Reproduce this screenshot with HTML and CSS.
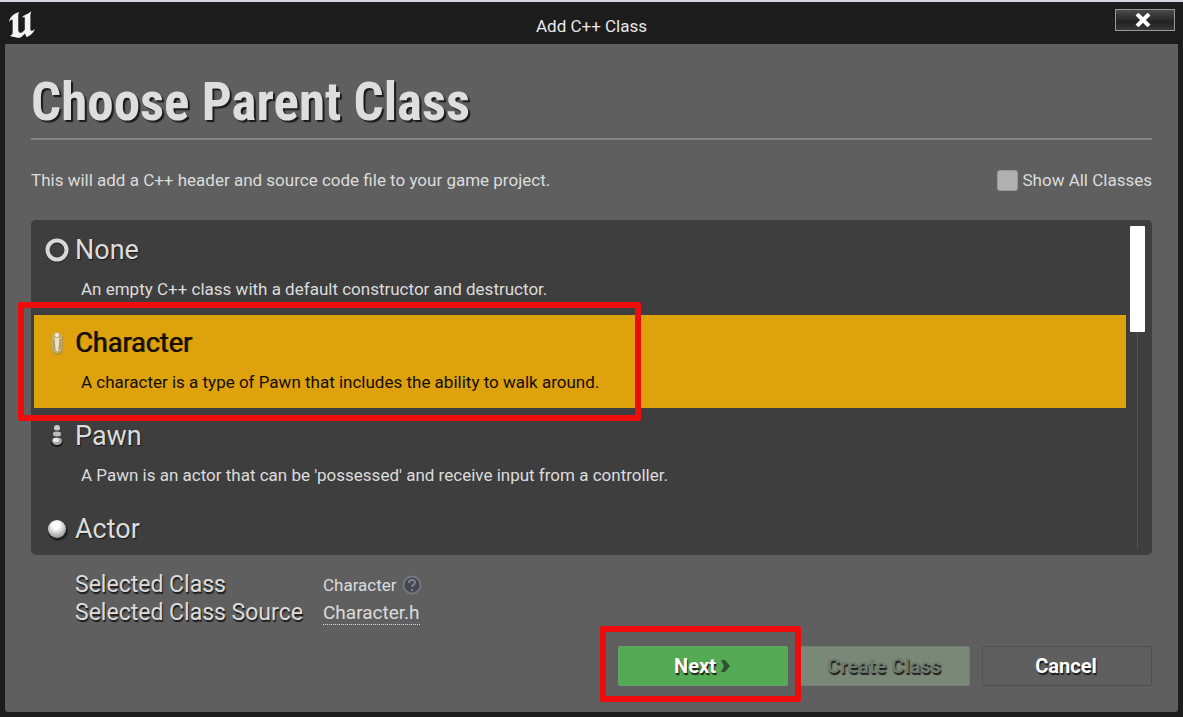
FILE: index.html
```html
<!DOCTYPE html>
<html lang="en">
<head>
  <meta charset="UTF-8" />
  <meta name="viewport" content="width=device-width, initial-scale=1.0" />
  <title>Add C++ Class</title>
  <link rel="stylesheet" href="styles.css">
</head>
<body>
  <div class="window">
    <header class="titlebar">
      <svg class="logo" viewBox="0 0 28 30" aria-hidden="true">
        <path d="M0 12 C1 6 5 3 11 1 C10 3 10 4 10 6 V20 C10 23 12 24 14 23 L17 20 V8 C17 6 16 6 14 7 C16 4 20 4 24 0 C23 3 23 4 23 6 V19 C23 22 25 22 28 19 C26 24 23 26 19 28 L17 24 C14 28 11 30 7 28 C4 28 3 28 1 26 C4 26 4 24 4 22 V11 C4 8 2 9 0 12 Z" />
      </svg>
      <span class="caption">Add C++ Class</span>
      <button class="close" type="button" aria-label="Close">
        <svg viewBox="0 0 16 14" aria-hidden="true"><path d="M2 1 L14 13 M14 1 L2 13" /></svg>
      </button>
    </header>

    <main class="content">
      <h1>Choose Parent Class</h1>

      <div class="intro">
        <p>This will add a C++ header and source code file to your game project.</p>
        <label class="show-all" for="showAll">
          <input type="checkbox" id="showAll">
          Show All Classes
        </label>
      </div>

      <div class="list-wrap">
        <div class="list">
          <ul class="classes" role="listbox" aria-label="Parent class">
            <li class="item" role="option" aria-selected="false">
              <h2>
                <svg class="icon" viewBox="0 0 26 26" aria-hidden="true">
                  <circle cx="13" cy="14" r="9.5" fill="none" stroke="#222" stroke-width="4" />
                  <circle cx="13" cy="13" r="9.5" fill="none" stroke="#d8d8d8" stroke-width="4" />
                </svg>
                None
              </h2>
              <p>An empty C++ class with a default constructor and destructor.</p>
            </li>
            <li class="item selected" role="option" aria-selected="true">
              <h2>
                <svg class="icon" viewBox="0 0 26 26" aria-hidden="true">
                  <rect x="8" y="3" width="11" height="22" rx="5" fill="#b8963c" />
                  <rect x="8" y="2" width="10" height="21" rx="5" fill="#c6ad72" />
                  <circle cx="13" cy="5" r="2" fill="#f5efe0" />
                  <path d="M10 8 H16 L15 14 L14 21 H12 L11 14 Z" fill="#ece2c6" />
                  <path d="M10 9 V19 M16 9 V19" stroke="#9c8a62" stroke-width="1" />
                </svg>
                Character
              </h2>
              <p>A character is a type of Pawn that includes the ability to walk around.</p>
            </li>
            <li class="item" role="option" aria-selected="false">
              <h2>
                <svg class="icon" viewBox="0 0 26 26" aria-hidden="true">
                  <ellipse cx="13" cy="20" rx="6" ry="4" fill="#1c1c1c" />
                  <circle cx="13" cy="5" r="3" fill="#ccc" />
                  <ellipse cx="13" cy="11" rx="4" ry="3" fill="#bbb" />
                  <ellipse cx="13" cy="18" rx="5" ry="4" fill="#aaa" />
                  <path d="M9 8 H17 M9 14 H17" stroke="#2a2a2a" stroke-width="1" />
                  <ellipse cx="12" cy="17" rx="3" ry="2" fill="#eee" />
                </svg>
                Pawn
              </h2>
              <p>A Pawn is an actor that can be 'possessed' and receive input from a controller.</p>
            </li>
            <li class="item" role="option" aria-selected="false">
              <h2>
                <svg class="icon" viewBox="0 0 26 26" aria-hidden="true">
                  <defs>
                    <radialGradient id="ball" cx="45%" cy="30%" r="65%">
                      <stop offset="0.3" stop-color="#fff" />
                      <stop offset="1" stop-color="#a0a0a0" />
                    </radialGradient>
                  </defs>
                  <circle cx="14" cy="15" r="10" fill="#222" />
                  <circle cx="13" cy="13" r="9" fill="url(#ball)" />
                </svg>
                Actor
              </h2>
            </li>
          </ul>
          <div class="scrollbar"><div class="thumb"></div></div>
        </div>
        <div class="highlight highlight-item"></div>
      </div>

      <dl class="summary">
        <dt>Selected Class</dt>
        <dd>
          Character
          <svg class="help" viewBox="0 0 20 20" aria-hidden="true">
            <circle cx="10" cy="10" r="8.5" fill="#444850" stroke="#74777d" stroke-width="2" />
            <path d="M7 8 C7 4 13 4 13 7.500 C13 10 10 9.500 10 12 M10 14 V16" fill="none" stroke="#7f838b" stroke-width="2" />
          </svg>
        </dd>
        <dt>Selected Class Source</dt>
        <dd><a href="#">Character.h</a></dd>
      </dl>

      <div class="actions">
        <div class="next-wrap">
          <button class="btn next" type="button">
            Next
            <svg class="arrow" viewBox="0 0 10 14" aria-hidden="true"><path d="M1 1 H5 L10 7 L5 13 H1 L4 7 Z" /></svg>
          </button>
          <div class="highlight highlight-next"></div>
        </div>
        <button class="btn create" type="button" disabled>Create Class</button>
        <button class="btn cancel" type="button">Cancel</button>
      </div>
    </main>
  </div>
</body>
</html>
```

FILE: styles.css
```css
* {
  box-sizing: border-box;
}

body {
  margin: 0;
  font-family: Roboto, "Liberation Sans", sans-serif;
  font-size: 17px;
  line-height: 20px;
  color: #dcdcdc;
  background: #1c1c1c;
}

h1, h2, p, ul, dl, dd {
  margin: 0;
  padding: 0;
}

.window {
  display: flex;
  flex-direction: column;
  min-height: 100vh;
  padding: 0 5px 5px;
  border-top: 2px solid #d4d6e0;
}

.titlebar {
  display: grid;
  grid-template-columns: 1fr auto 1fr;
  height: 42px;
  padding: 7px 3px;
}

.logo {
  width: 28px;
  height: 30px;
  padding-top: 2px;
  fill: #f4f4f4;
}

.caption {
  padding-top: 7px;
  color: #e8e8e8;
}

.close {
  display: flex;
  align-items: center;
  justify-content: center;
  justify-self: end;
  width: 60px;
  height: 22px;
  padding: 0 4px 0 0;
  background: linear-gradient(#4b4b4b, #222 60%, #383838);
  border: 1px solid #999;
}

.close svg {
  width: 16px;
  height: 14px;
  stroke: #fff;
  stroke-width: 4;
}

.content {
  flex: 1;
  padding: 26px 26px 24px;
  background: #5f5f5f;
  border-radius: 0 0 3px 3px;
}

h1 {
  padding-bottom: 4px;
  border-bottom: 2px solid #858585;
  font-family: "Roboto Condensed", Roboto, "Liberation Sans", sans-serif;
  font-size: 53px;
  font-weight: 700;
  line-height: 64px;
  color: #dedede;
  text-shadow: 2px 2px 1px #1a1a1a;
}

.intro {
  display: flex;
  justify-content: space-between;
  align-items: center;
  height: 80px;
}

.show-all {
  display: flex;
  align-items: center;
  gap: 4px;
}

.show-all input {
  width: 21px;
  height: 21px;
  margin: 0;
  appearance: none;
  background: #b0b0b0;
  border: 1px solid #9a9a9a;
  border-radius: 3px;
}

.show-all input:checked {
  background: #dda20c;
}

.list-wrap {
  position: relative;
}

.list {
  display: flex;
  height: 335px;
  padding: 2px 6px 6px 3px;
  overflow: hidden;
  background: #3e3e3e;
  border-radius: 5px;
}

.classes {
  flex: 1;
  height: 327px;
  overflow: hidden;
  list-style: none;
}

.item {
  height: 93px;
  padding: 10px 10px 0;
}

.item h2 {
  display: flex;
  align-items: center;
  gap: 5px;
  font-size: 27px;
  font-weight: 400;
  line-height: 36px;
  text-shadow: 1px 1px 1px #1a1a1a;
}

.item p {
  padding: 11px 0 0 37px;
}

.icon {
  width: 26px;
  height: 26px;
}

.selected {
  color: #150c00;
  background: #dda20c;
}

.selected h2 {
  text-shadow: 1px 0 0 #4a3605;
}

.scrollbar {
  width: 16px;
  margin: 4px 0 0 4px;
  background: linear-gradient(#555, #555) 7px 0 / 1px 100% no-repeat;
}

.thumb {
  width: 15px;
  height: 106px;
  background: #fff;
  border-radius: 1px;
}

.summary {
  display: grid;
  grid-template-columns: 248px 1fr;
  padding: 16px 0 0 44px;
  line-height: 28px;
}

.summary dt {
  font-size: 23px;
  white-space: nowrap;
  text-shadow: 1px 2px 1px #1a1a1a;
}

.summary dd {
  display: flex;
  align-items: center;
  gap: 5px;
}

.summary a {
  color: #dcdcdc;
  font-size: 19px;
  line-height: 22px;
  text-decoration: none;
  border-bottom: 1px dotted #dcdcdc;
}

.help {
  width: 20px;
  height: 20px;
}

.actions {
  display: flex;
  justify-content: flex-end;
  gap: 12px;
  padding-top: 19px;
}

.next-wrap {
  position: relative;
}

.btn {
  display: flex;
  align-items: center;
  justify-content: center;
  gap: 4px;
  width: 170px;
  height: 40px;
  padding: 0 2px 0 0;
  border: 1px solid #505050;
  border-radius: 2px;
  font-family: Roboto, "Liberation Sans", sans-serif;
  font-size: 20px;
  font-weight: 700;
  color: #fff;
  text-shadow: 1px 2px 1px #1a1a1a;
}

.next {
  background: #54a954;
  border-color: #62a562;
}

.arrow {
  width: 10px;
  height: 14px;
  fill: #2e522e;
}

.create {
  color: #6f7b6d;
  background: #7a8878;
  border-color: #708070;
}

.cancel {
  background: #5f5f5f;
}

/* red call-out frames */
.highlight {
  position: absolute;
  border: 6px solid #ee0c0c;
  border-radius: 2px;
  pointer-events: none;
}

.highlight-item {
  top: 82px;
  left: -13px;
  width: 623px;
  height: 119px;
}

.highlight-next {
  top: -20px;
  left: -18px;
  width: 201px;
  height: 76px;
}
```
